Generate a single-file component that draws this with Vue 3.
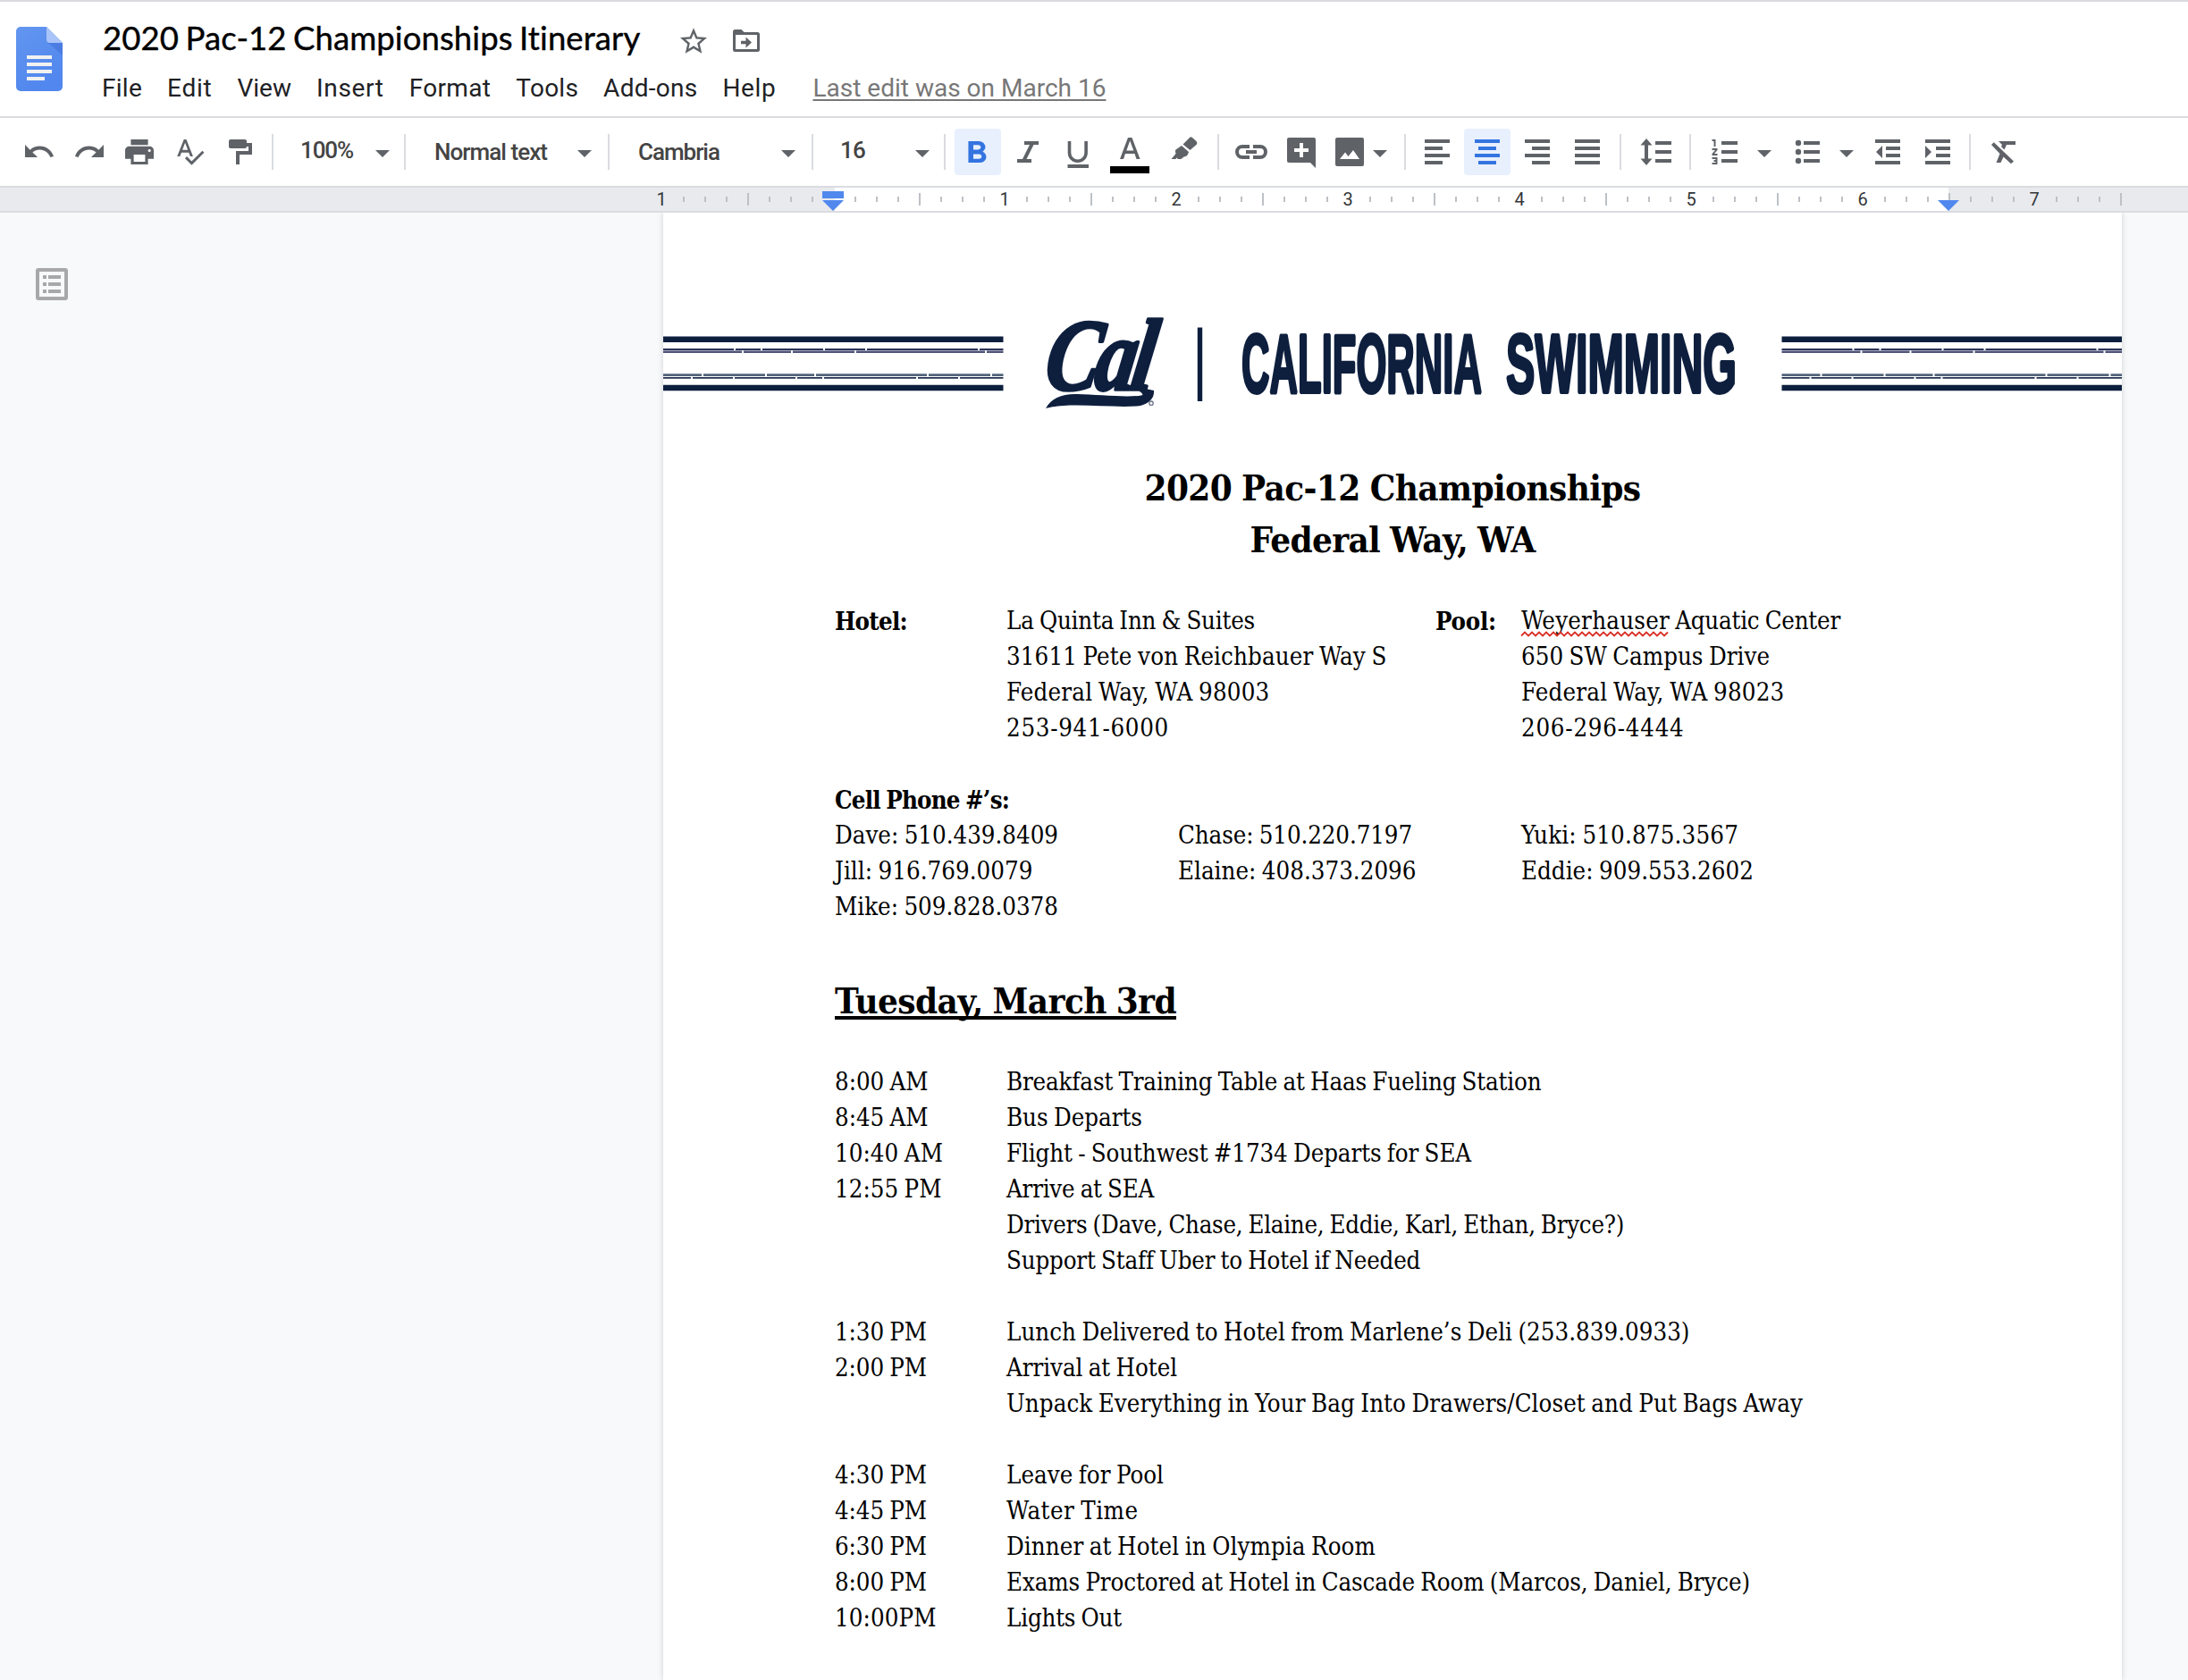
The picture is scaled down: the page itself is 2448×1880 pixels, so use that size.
<script setup>
// Spreads the letters of an element so that its line reaches the given width.
const vFit = {
  mounted(el, { value }) {
    if (!value) return
    const natural = el.getBoundingClientRect().width
    el.style.letterSpacing = (value - natural) / el.textContent.length + 'px'
  },
}

const menus = [
  ['File', 45], ['Edit', 50.5], ['View', 60.5], ['Insert', 75.7],
  ['Format', 91.6], ['Tools', 69.8], ['Add-ons', 105.3], ['Help', 60],
]

// kind: icon | sep | arrow | label. gap is the free space before the item.
const tools = [
  { kind: 'icon', gap: 26, body: '<path transform="translate(-1.1 -.9) scale(1.5625)" d="M12.5 8c-2.65 0-5.05.99-6.9 2.6L2 7v9h9l-3.62-3.62c1.39-1.16 3.16-1.88 5.12-1.88 3.54 0 6.55 2.31 7.6 5.5l2.37-.78C21.08 11.03 17.15 8 12.5 8z"/>' },
  { kind: 'icon', gap: 20, body: '<path transform="translate(-.4 -.9) scale(1.5625)" d="M18.4 10.6C16.55 8.99 14.15 8 11.5 8c-4.65 0-8.58 3.03-9.96 7.22L3.9 16c1.05-3.19 4.05-5.5 7.6-5.5 1.95 0 3.73.72 5.12 1.88L13 16h9V7l-3.6 3.6z"/>' },
  { kind: 'icon', gap: 20, body: '<path transform="translate(-1.2 -.67) scale(1.6 1.555)" d="M19 8H5c-1.66 0-3 1.34-3 3v6h4v4h12v-4h4v-6c0-1.66-1.34-3-3-3zm-3 11H8v-5h8v5zm3-7c-.55 0-1-.45-1-1s.45-1 1-1 1 .45 1 1-.45 1-1 1zm-1-9H6v4h12V3z"/>' },
  { kind: 'icon', gap: 21, body: '<path transform="translate(-.4 -.4) scale(1.47)" d="M12.45 16h2.09L9.43 3H7.57L2.46 16h2.09l1.12-3h5.64l1.14 3zm-6.02-5L8.5 5.48 10.57 11H6.43zm15.16.59l-8.09 8.09L9.83 16l-1.41 1.41 5.09 5.09L23 13l-1.41-1.41z"/>' },
  { kind: 'icon', gap: 19, body: '<path d="M8 4h16a2 2 0 0 1 2 2v2h6v13H18v11h-4V17h14v-5h-2v0a2 2 0 0 1-2 2H8a2 2 0 0 1-2-2V6a2 2 0 0 1 2-2z"/>' },
  { kind: 'sep', gap: 18 },
  { kind: 'label', gap: 30, text: '100%', w: 59, box: 84, up: true },
  { kind: 'arrow', gap: 0 },
  { kind: 'sep', gap: 16 },
  { kind: 'label', gap: 32, text: 'Normal text', w: 126, box: 160 },
  { kind: 'arrow', gap: 0 },
  { kind: 'sep', gap: 18 },
  { kind: 'label', gap: 32, text: 'Cambria', w: 91, box: 160 },
  { kind: 'arrow', gap: 0 },
  { kind: 'sep', gap: 18 },
  { kind: 'label', gap: 30, text: '16', w: 28, box: 84, up: true },
  { kind: 'arrow', gap: 0 },
  { kind: 'sep', gap: 16 },
  { kind: 'icon', gap: 18, on: true, body: '<path transform="translate(-5.6 -.86) scale(1.86 1.714)" d="M15.6 10.79c.97-.67 1.65-1.77 1.65-2.79 0-2.26-1.75-4-4-4H7v14h7.04c2.09 0 3.71-1.7 3.71-3.79 0-1.52-.86-2.82-2.15-3.42zM10 6.5h3c.83 0 1.5.67 1.5 1.5s-.67 1.5-1.5 1.5h-3v-3zm3.5 9H10v-3h3.5c.83 0 1.5.67 1.5 1.5s-.67 1.5-1.5 1.5z"/>' },
  { kind: 'icon', gap: 20, body: '<path d="M14 6H30V10H24.5L16.5 26H22V30H6V26H12L20 10H14z"/>' },
  { kind: 'icon', gap: 20, body: '<path d="M8.500 6V19a9.300 9.300 0 0 0 18.600 0V6" fill="none" stroke="currentColor" stroke-width="3.600"/><path d="M6.500 32h23.500v4H6.500z"/>' },
  { kind: 'icon', gap: 22, body: '<path fill-rule="evenodd" d="M7 26 16 2h4.500L29.500 26h-4l-2-6h-10.500l-2 6zM14.300 16.500h8L18.250 5.500z"/><path d="M-4 34h44v8H-4z" fill="#000"/>' },
  { kind: 'icon', gap: 24, body: '<path d="M24 3Q26 0 28 2L32.500 6Q34 8 33 9.500L25.500 16 17.500 9.500zM16 11l8 7q-1 5-5.500 5.500L15.500 26h-3.500l-1.500-1.500-1 1.500H4.500l5-6q-1-4 0-4.500z"/>' },
  { kind: 'sep', gap: 20 },
  { kind: 'icon', gap: 18, body: '<path d="M16 12H8a6 6 0 0 0 0 12h8M20 12h8a6 6 0 0 1 0 12h-8" fill="none" stroke="currentColor" stroke-width="4"/><path d="M12 16h12v4H12z"/>' },
  { kind: 'icon', gap: 20, body: '<path fill-rule="evenodd" d="M4 2H32a2 2 0 0 1 2 2V36l-6-6H4a2 2 0 0 1-2-2V4a2 2 0 0 1 2-2zM16 8v6h-6v4h6v6h4v-6h6v-4h-6V8z"/>' },
  { kind: 'icon', gap: 18, body: '<path fill-rule="evenodd" d="M4 2H32a2 2 0 0 1 2 2V32a2 2 0 0 1-2 2H4a2 2 0 0 1-2-2V4a2 2 0 0 1 2-2zM7 26H29L22 16 16.500 23 13 18.500z"/>' },
  { kind: 'arrow', gap: 8 },
  { kind: 'sep', gap: 19 },
  { kind: 'icon', gap: 17, body: '<path d="M4 4h28v4H4zM4 12h20v4H4zM4 20h28v4H4zM4 28h20v4H4z"/>' },
  { kind: 'icon', gap: 20, on: true, body: '<path d="M4 4h28v4H4zM8 12h20v4H8zM4 20h28v4H4zM8 28h20v4H8z"/>' },
  { kind: 'icon', gap: 20, body: '<path d="M4 4h28v4H4zM12 12h20v4H12zM4 20h28v4H4zM12 28h20v4H12z"/>' },
  { kind: 'icon', gap: 20, body: '<path d="M4 4h28v4H4zM4 12h28v4H4zM4 20h28v4H4zM4 28h28v4H4z"/>' },
  { kind: 'sep', gap: 18 },
  { kind: 'icon', gap: 20, body: '<path d="M8 3l6.500 7.500H10v15h4.500L8 33 1.500 25.500H6v-15H1.500zM18 6h18v4H18zM18 16h18v4H18zM18 26h18v4H18z"/>' },
  { kind: 'sep', gap: 20 },
  { kind: 'icon', gap: 20, body: '<path d="M3.500 4H7.500v8h-2V6h-2zM3.500 14h6v2l-3.500 4h3.500v2h-6v-2l3.500-4h-3.500zM3.500 24h6v8h-6v-2h4v-1h-2v-2h2v-1h-4zM14 6h18v4H14zM14 16h18v4H14zM14 26h18v4H14z"/>' },
  { kind: 'arrow', gap: 18 },
  { kind: 'icon', gap: 23, body: '<circle cx="7" cy="8" r="3.200"/><circle cx="7" cy="18" r="3.200"/><circle cx="7" cy="28" r="3.200"/><path d="M13 6h18v4H13zM13 16h18v4H13zM13 26h18v4H13z"/>' },
  { kind: 'arrow', gap: 17 },
  { kind: 'icon', gap: 20, body: '<path d="M4 4h28v4H4zM16 12h16v4H16zM16 20h16v4H16zM4 28h28v4H4zM12 11v14l-7-7z"/>' },
  { kind: 'icon', gap: 20, body: '<path d="M4 4h28v4H4zM16 12h16v4H16zM16 20h16v4H16zM4 28h28v4H4zM4 11v14l7-7z"/>' },
  { kind: 'sep', gap: 17 },
  { kind: 'icon', gap: 18, body: '<path d="M13 6h19v4H22l-2.500 5.500-3.500-3.500 1-2zM7.800 7.200 30 28.500 27 31.300 18.500 23.500 15.500 30h-5l4-10L5 10z"/>' },
]

const ticks = Array.from({ length: 69 }, (_, i) => ({
  tall: i % 4 === 0,
  label: i % 8 === 0 && i !== 8 && i < 66 ? (i ? String(i / 8 - 1) : '1') : '',
  hidden: i === 8,
}))

const info = [
  [{ c: 1, t: 'Hotel:', w: 81, b: true }, { c: 3, t: 'La Quinta Inn & Suites', w: 278 }, { c: 8, t: 'Pool:', w: 68, b: true }, { c: 9, t: 'Weyerhauser', w: 166, s: true, rest: ' Aquatic Center', rw: 191 }],
  [{ c: 3, t: '31611 Pete von Reichbauer Way S', w: 425.500 }, { c: 9, t: '650 SW Campus Drive', w: 278 }],
  [{ c: 3, t: 'Federal Way, WA 98003', w: 294.500 }, { c: 9, t: 'Federal Way, WA 98023', w: 294.500 }],
  [{ c: 3, t: '253-941-6000', w: 182 }, { c: 9, t: '206-296-4444', w: 182.500 }],
  [],
  [{ c: 1, t: 'Cell Phone #’s:', w: 195, b: true }],
  [{ c: 1, t: 'Dave: 510.439.8409', w: 250 }, { c: 5, t: 'Chase: 510.220.7197', w: 262 }, { c: 9, t: 'Yuki: 510.875.3567', w: 243 }],
  [{ c: 1, t: 'Jill: 916.769.0079', w: 221.500 }, { c: 5, t: 'Elaine: 408.373.2096', w: 266.500 }, { c: 9, t: 'Eddie: 909.553.2602', w: 260 }],
  [{ c: 1, t: 'Mike: 509.828.0378', w: 250 }],
]

const schedule = [
  ['8:00 AM', 104.5, 'Breakfast Training Table at Haas Fueling Station', 598.5],
  ['8:45 AM', 104.5, 'Bus Departs', 152],
  ['10:40 AM', 121, 'Flight - Southwest #1734 Departs for SEA', 520],
  ['12:55 PM', 119.5, 'Arrive at SEA', 165],
  ['', 0, 'Drivers (Dave, Chase, Elaine, Eddie, Karl, Ethan, Bryce?)', 691],
  ['', 0, 'Support Staff Uber to Hotel if Needed', 462.5],
  ['', 0, '', 0],
  ['1:30 PM', 103, 'Lunch Delivered to Hotel from Marlene’s Deli (253.839.0933)', 764.5],
  ['2:00 PM', 103, 'Arrival at Hotel', 191],
  ['', 0, 'Unpack Everything in Your Bag Into Drawers/Closet and Put Bags Away', 891],
  ['', 0, '', 0],
  ['4:30 PM', 103, 'Leave for Pool', 176],
  ['4:45 PM', 103, 'Water Time', 147.5],
  ['6:30 PM', 103, 'Dinner at Hotel in Olympia Room', 413],
  ['8:00 PM', 103, 'Exams Proctored at Hotel in Cascade Room (Marcos, Daniel, Bryce)', 832],
  ['10:00PM', 113.5, 'Lights Out', 129],
]

const squiggle = Array.from({ length: 42 }, (_, i) => `${i * 4},${i % 2 ? 1.5 : 5.5}`).join(' ')

// Thin broken lines of the banner: y, thickness, colour, break positions.
const rules = [
  [391, 2, '#2b3358', [80, 110, 180, 227, 353]],
  [393.8, 2.6, '#4d5378', [89, 144, 215, 361]],
  [419.6, 2.6, '#53647a', [44, 115, 170, 296, 367]],
  [422.9, 1.8, '#1f2f4d', [32, 79, 149, 179, 284, 331]],
]
</script>

<template>
  <div class="app">
    <header class="top">
      <svg class="doc-logo" viewBox="0 0 52 72">
        <defs>
          <linearGradient id="sheet" x1="0" y1="0" x2=".4" y2="1">
            <stop offset="0" stop-color="#6396f0" />
            <stop offset="1" stop-color="#5187ee" />
          </linearGradient>
        </defs>
        <path d="M5 0H34L52 18V67a5 5 0 0 1-5 5H5a5 5 0 0 1-5-5V5a5 5 0 0 1 5-5z" fill="url(#sheet)" />
        <path d="M36 18H52V32z" fill="#4272d8" opacity=".6" />
        <path d="M34 0 52 18H38a4 4 0 0 1-4-4z" fill="#a9c4f8" />
        <path d="M12 32h28v4H12zM12 40h28v4H12zM12 48h28v4H12zM12 56h20v4H12z" fill="#f1f1f1" />
      </svg>
      <div class="top-main">
        <div class="title-row">
          <span v-fit="602" class="title">2020 Pac-12 Championships Itinerary</span>
          <svg class="star" viewBox="2 2 20 19"><path d="M22 9.240l-7.190-.62L12 2 9.190 8.630 2 9.240l5.460 4.730L5.820 21 12 17.270 18.180 21l-1.630-7.030L22 9.240zM12 15.400l-3.760 2.270 1-4.280-3.320-2.880 4.380-.38L12 6.100l1.710 4.040 4.380.38-3.320 2.880 1 4.280L12 15.400z" /></svg>
          <svg class="folder" viewBox="0 0 30 24"><path fill-rule="evenodd" d="M2.500-1H9.500L12.500 2H27.500a2.500 2.500 0 0 1 2.500 2.500V21.500a2.500 2.500 0 0 1-2.500 2.500H2.500A2.500 2.500 0 0 1 0 21.500V1.500A2.500 2.500 0 0 1 2.500-1zM3 5V21H27V5zM14.500 7.500l6.500 6-6.500 6V15.200H9V11.800h5.500z" /></svg>
        </div>
        <nav class="menu-row">
          <span v-for="m in menus" :key="m[0]" v-fit="m[1]">{{ m[0] }}</span>
          <a v-fit="328" class="last-edit">Last edit was on March 16</a>
        </nav>
      </div>
    </header>

    <div class="toolbar">
      <template v-for="(t, i) in tools" :key="i">
        <span v-if="t.kind === 'sep'" class="sep" :style="{ marginLeft: t.gap + 'px' }"></span>
        <svg v-else-if="t.kind === 'arrow'" class="arrow" viewBox="0 0 16 36" :style="{ marginLeft: t.gap + 'px' }"><path d="M0 16h16l-8 8z" /></svg>
        <span v-else-if="t.kind === 'label'" class="label" :class="{ up: t.up }" :style="{ marginLeft: t.gap + 'px', width: t.box + 'px' }"><span v-fit="t.w">{{ t.text }}</span></span>
        <svg v-else class="icon" :class="{ on: t.on }" viewBox="0 0 36 36" :style="{ marginLeft: t.gap + 'px' }" v-html="t.body"></svg>
      </template>
    </div>

    <div class="ruler">
      <div class="ruler-side left"></div>
      <div class="ruler-mid"></div>
      <div class="ruler-side right"></div>
      <div class="ticks">
        <div v-for="(k, i) in ticks" :key="i" class="tick">
          <span v-if="k.label" class="num">{{ k.label }}</span>
          <i v-else-if="!k.hidden" :class="{ tall: k.tall }"></i>
        </div>
      </div>
      <svg class="marker first" viewBox="0 0 24 22"><path d="M0 0h24v8H0zM0 10h24L12 22z" /></svg>
      <svg class="marker last" viewBox="0 0 24 22"><path d="M0 10h24L12 22z" /></svg>
    </div>

    <main class="canvas">
      <aside class="outline">
        <svg viewBox="0 0 36 36"><path fill-rule="evenodd" d="M3 0H33a3 3 0 0 1 3 3V33a3 3 0 0 1-3 3H3a3 3 0 0 1-3-3V3a3 3 0 0 1 3-3zM4 4V32H32V4zM8 8h4v4H8zM14 8h14v4H14zM8 16h4v4H8zM14 16h14v4H14zM8 24h4v4H8zM14 24h14v4H14z" /></svg>
      </aside>
      <article class="page">
        <svg class="banner" viewBox="742 350 1632 112">
          <g v-for="x in [742, 1993.5]" :key="x">
            <path :d="`M${x} 379.700h380.500M${x} 434h380.500`" stroke="#0e1f3e" stroke-width="6.600" />
            <g v-for="(r, i) in rules" :key="i">
              <path :d="`M${x} ${r[0]}h380.500`" :stroke="r[2]" :stroke-width="r[1]" />
              <path v-for="b in r[3]" :key="b" :d="`M${x + b - 1} ${r[0]}h2`" stroke="#fff" stroke-width="3.600" />
            </g>
          </g>
          <text class="mark" transform="translate(1166 435.500) skewX(-9) scale(.8 1)">Cal</text>
          <path fill="#0e1f3e" d="M1170 457C1176 446 1188 440.500 1205 441C1228 441.500 1260 445 1277 442.500C1281 441.500 1276 439 1268 432L1291 437C1292 446 1284 453.500 1272 454.600C1245 456 1215 452.500 1190 454C1180 454.500 1174 456 1170 457z" />
          <circle cx="1288" cy="451.200" r="2.200" fill="none" stroke="#6a7488" stroke-width="1.300" />
          <path d="M1342.500 366.500V449" stroke="#0e1f3e" stroke-width="5.400" />
          <g class="wordmark">
            <text x="1389" y="438.500" textLength="269" lengthAdjust="spacingAndGlyphs">CALIFORNIA</text>
            <text x="1685" y="438.500" textLength="258" lengthAdjust="spacingAndGlyphs">SWIMMING</text>
          </g>
        </svg>

        <h1><span v-fit="555">2020 Pac-12 Championships</span><br /><span v-fit="319">Federal Way, WA</span></h1>

        <section class="grid">
          <div v-for="(row, i) in info" :key="i" class="row">
            <div v-for="cell in row" :key="cell.t" :class="['c' + cell.c, { bold: cell.b }]">
              <span v-fit="cell.w">{{ cell.t }}</span><span v-if="cell.rest" v-fit="cell.rw" class="pre">{{ cell.rest }}</span>
              <svg v-if="cell.s" class="squiggle" viewBox="0 0 166 7"><polyline :points="squiggle" /></svg>
            </div>
          </div>
        </section>

        <h2><span v-fit="382">Tuesday, March 3rd</span></h2>

        <section class="grid">
          <div v-for="(line, i) in schedule" :key="i" class="row">
            <div class="c1"><span v-if="line[0]" v-fit="line[1]">{{ line[0] }}</span></div>
            <div class="c3"><span v-if="line[2]" v-fit="line[3]">{{ line[2] }}</span></div>
          </div>
        </section>
      </article>
    </main>
  </div>
</template>

<style>
body { margin: 0; overflow: hidden; }
</style>

<style scoped>
.app { width: 2448px; height: 1880px; overflow: hidden; display: flex; flex-direction: column; box-sizing: border-box; border-top: 2px solid #dadce0; background: #fff; font-family: Roboto, "Liberation Sans", sans-serif; }
svg { display: block; flex: none; overflow: visible; }
.top { height: 128px; flex: none; display: flex; border-bottom: 2px solid #dadce0; }
.doc-logo { width: 52px; height: 72px; margin: 28px 0 0 18px; }
.top-main { margin-left: 44px; }
.title-row { display: flex; align-items: flex-start; height: 72px; box-sizing: border-box; padding-top: 17px; }
.title { font-family: Lato, sans-serif; font-size: 36.500px; line-height: 46px; color: #000; -webkit-text-stroke: .4px #000; white-space: pre; word-spacing: -2px; margin-left: 1px; }
.star { width: 30px; height: 29px; margin: 12px 0 0 45px; fill: #5f6368; }
.folder { width: 30px; height: 24px; margin: 15px 0 0 29px; fill: #5f6368; }
.menu-row { display: flex; gap: 28px; font-size: 28px; line-height: 40px; padding-top: 5px; color: #202124; white-space: pre; }
.last-edit { margin-left: 13px; color: #777; text-decoration: underline; text-decoration-thickness: 2px; text-underline-offset: 3px; text-decoration-skip-ink: none; }

.toolbar { height: 76px; flex: none; display: flex; align-items: center; border-bottom: 2px solid #dadce0; color: #5f6368; fill: currentColor; }
.icon { width: 36px; height: 36px; }
.icon.on { color: #3474e0; background: #e8f0fe; padding: 8px; border-radius: 4px; position: relative; left: -8px; margin-right: -16px; }
.arrow { width: 16px; height: 36px; }
.sep { width: 2px; height: 40px; flex: none; background: #dadce0; }
.label { flex: none; font-size: 26px; font-weight: 500; line-height: 36px; color: #444; white-space: pre; }
.label.up { padding-bottom: 4px; }

.ruler { position: relative; height: 26px; flex: none; display: flex; border-bottom: 2px solid #dadce0; }
.ruler-side { background: #e8eaed; }
.ruler-side.left { width: 934px; }
.ruler-mid { width: 1246px; }
.ruler-side.right { flex: 1; }
.ticks { position: absolute; left: 729px; top: 0; height: 26px; display: flex; }
.tick { width: 24px; display: flex; align-items: center; justify-content: center; }
.tick i { width: 2px; height: 6px; background: #bdc1c6; }
.tick i.tall { height: 14px; }
.num { font-size: 20px; line-height: 26px; color: #333639; margin-right: 2px; }
.marker { position: absolute; top: 4px; width: 24px; height: 22px; fill: #5088ee; }
.marker.first { left: 920px; }
.marker.last { left: 2168px; }

.canvas { flex: 1; min-height: 0; display: flex; background: #f8f9fb; }
.outline { width: 742px; flex: none; }
.outline svg { width: 36px; height: 36px; margin: 62px 0 0 40px; fill: #a8a8aa; }
.page { width: 1632px; flex: none; background: #fff; box-shadow: 0 0 6px rgba(60, 64, 67, .22); clip-path: inset(0 -10px); font-family: "DejaVu Serif Condensed", "DejaVu Serif", serif; font-stretch: condensed; color: #000; font-size: 27.400px; line-height: 40px; word-spacing: -1.400px; }
.banner { width: 1632px; height: 112px; margin-top: 112px; word-spacing: 0; }
.mark { font-family: "Liberation Serif", serif; font-weight: 700; font-style: italic; font-size: 114px; letter-spacing: -6px; fill: #0e1f3e; stroke: #0e1f3e; stroke-width: 3.500px; stroke-linejoin: round; }
.wordmark { font-family: "Liberation Sans Narrow", "Liberation Sans", sans-serif; font-stretch: condensed; font-weight: 700; font-size: 93px; fill: #0e1f3e; stroke: #0e1f3e; stroke-width: 4px; stroke-linejoin: bevel; }
h1 { margin: 55px 0 0; font-size: 40px; line-height: 58px; text-align: center; white-space: pre; word-spacing: -1px; }
h2 { margin: 56px 0 0 192px; font-size: 40px; line-height: 58px; white-space: pre; word-spacing: -1px; }
h2 span { text-decoration: underline; text-decoration-thickness: 4px; text-underline-offset: 3px; text-decoration-skip-ink: none; }
.grid { margin: 42px 0 0 192px; }
.row { display: grid; grid-template-columns: repeat(13, 96px); height: 40px; white-space: nowrap; }
.row > div { position: relative; width: 0; grid-row: 1; }
.c1 { grid-column: 1; }
.c3 { grid-column: 3; }
.c5 { grid-column: 5; }
.c8 { grid-column: 8; }
.c9 { grid-column: 9; }
.bold { font-weight: 700; }
.pre { white-space: pre; }
.squiggle { position: absolute; left: 0; top: 31px; width: 166px; height: 7px; }
.squiggle polyline { fill: none; stroke: #d93025; stroke-width: 1.800; }
</style>
